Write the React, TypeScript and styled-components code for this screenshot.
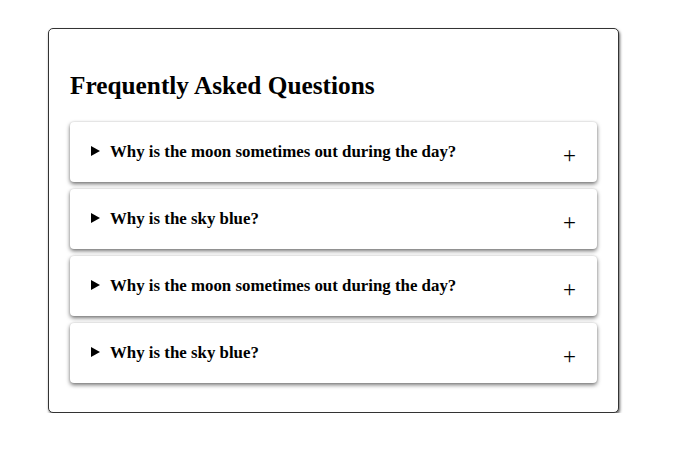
import React from "react";
import styled, { createGlobalStyle } from "styled-components";

const Global = createGlobalStyle`
  html, body { margin: 0; padding: 0; background: #fff; }
  body { font-family: "Liberation Serif", "Times New Roman", serif; color: #000; }
`;

const Page = styled.div`
  padding: 28px 0 0 48px;
`;

const Card = styled.section`
  box-sizing: border-box;
  width: 571px;
  border: 1px solid #333;
  border-radius: 5px;
  box-shadow: 1px 2px 3px rgba(0, 0, 0, 0.6);
  padding: 22px 21px 29px 21px;
  background: #fff;
`;

const Title = styled.h2`
  margin: 20px 0 23px 0;
  font-size: 25.3px;
  font-weight: bold;
  line-height: 28px;
`;

const List = styled.div`
  display: flex;
  flex-direction: column;
  gap: 7px;
`;

const Item = styled.div`
  box-sizing: border-box;
  height: 60px;
  display: flex;
  align-items: center;
  padding: 0 21px 0 21px;
  border-radius: 4px;
  background: #fff;
  box-shadow: 0 2px 4px rgba(0, 0, 0, 0.55), 0 0 2px rgba(0, 0, 0, 0.12);
`;

const Question = styled.div`
  flex: 1;
  display: flex;
  align-items: center;
  gap: 10px;
  font-size: 16.85px;
  font-weight: bold;
`;

const Triangle = styled.svg`
  width: 9px;
  height: 10px;
  flex: none;
  margin-top: -2px;
`;

const Plus = styled.span`
  font-size: 23px;
  line-height: 1;
  margin-top: 6px;
`;

const questions = [
  "Why is the moon sometimes out during the day?",
  "Why is the sky blue?",
  "Why is the moon sometimes out during the day?",
  "Why is the sky blue?",
];

export default function App() {
  return (
    <>
      <Global />
      <Page>
        <Card>
          <Title>Frequently Asked Questions</Title>
          <List>
            {questions.map((q, i) => (
              <Item key={i}>
                <Question>
                  <Triangle viewBox="0 0 9 10">
                    <polygon points="0,0 9,5 0,10" fill="#000" />
                  </Triangle>
                  <span>{q}</span>
                </Question>
                <Plus>+</Plus>
              </Item>
            ))}
          </List>
        </Card>
      </Page>
    </>
  );
}
